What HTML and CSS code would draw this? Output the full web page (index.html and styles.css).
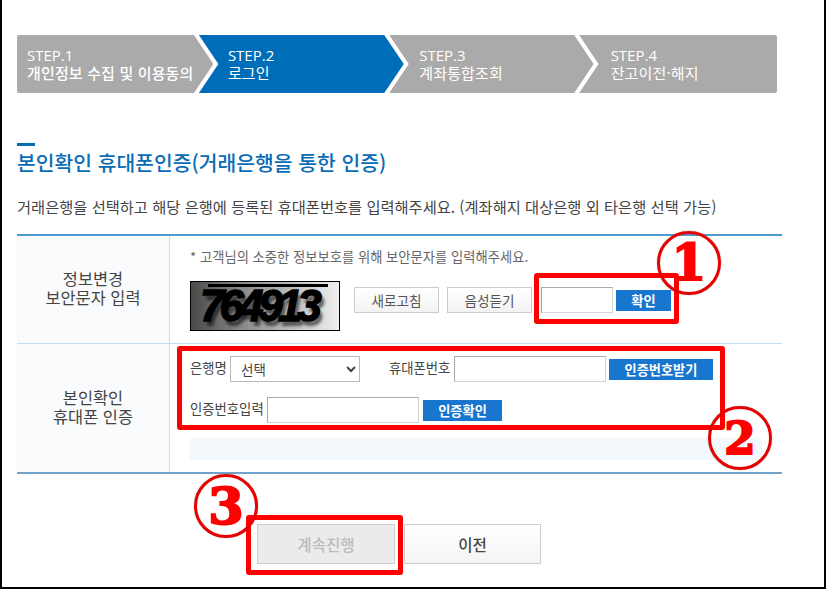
FILE: index.html
```html
<!DOCTYPE html>
<html lang="ko">
<head>
<meta charset="utf-8">
<title>본인확인 휴대폰인증</title>
<link rel="stylesheet" href="styles.css">
</head>
<body>
<div class="frame">
  <ol class="steps">
    <li class="step step-1"><span class="step-num">STEP.1</span><strong class="step-name step-name-bold">개인정보 수집 및 이용동의</strong></li>
    <li class="step step-2 is-active"><span class="step-num">STEP.2</span><strong class="step-name">로그인</strong></li>
    <li class="step step-3"><span class="step-num">STEP.3</span><strong class="step-name">계좌통합조회</strong></li>
    <li class="step step-4"><span class="step-num">STEP.4</span><strong class="step-name">잔고이전·해지</strong></li>
  </ol>

  <h1 class="title">본인확인 휴대폰인증(거래은행을 통한 인증)</h1>
  <p class="desc">거래은행을 선택하고 해당 은행에 등록된 휴대폰번호를 입력해주세요. (계좌해지 대상은행 외 타은행 선택 가능)</p>

  <div class="table">
    <div class="row row-captcha">
      <div class="label">정보변경<br>보안문자 입력</div>
      <div class="cell">
        <p class="note">* 고객님의 소중한 정보보호를 위해 보안문자를 입력해주세요.</p>
        <div class="captcha-line">
          <div class="captcha"><span class="captcha-text">764913</span></div>
          <div class="captcha-actions">
            <button class="btn-light" type="button">새로고침</button>
            <button class="btn-light" type="button">음성듣기</button>
            <input class="field field-code" type="text">
            <button class="btn-blue btn-ok" type="button">확인</button>
          </div>
        </div>
      </div>
    </div>
    <div class="row row-phone">
      <div class="label">본인확인<br>휴대폰 인증</div>
      <div class="cell cell-phone">
        <div class="form-line">
          <label class="form-label form-label-bank">은행명</label>
          <select class="field-select"><option>선택</option></select>
          <label class="form-label form-label-phone">휴대폰번호</label>
          <input class="field field-wide" type="text">
          <button class="btn-blue btn-request" type="button">인증번호받기</button>
        </div>
        <div class="form-line form-line-second">
          <label class="form-label form-label-auth">인증번호입력</label>
          <input class="field field-wide" type="text">
          <button class="btn-blue btn-verify" type="button">인증확인</button>
        </div>
        <div class="info-box"></div>
      </div>
    </div>
  </div>

  <div class="actions">
    <button class="btn-main btn-disabled" type="button">계속진행</button>
    <button class="btn-main" type="button">이전</button>
  </div>

  <div class="mark mark-box-1"></div>
  <div class="mark mark-box-2"></div>
  <div class="mark mark-box-3"></div>
  <div class="badge badge-1"><span>1</span></div>
  <div class="badge badge-2"><span>2</span></div>
  <div class="badge badge-3"><span>3</span></div>
</div>
</body>
</html>
```

FILE: styles.css
```css
* { box-sizing: border-box; }
html, body { margin: 0; padding: 0; background: #fff; }
body { font-family: "Noto Sans CJK KR", "Noto Sans", sans-serif; color: #444; overflow: hidden; }

.frame {
  position: relative;
  width: 826px;
  height: 589px;
  padding: 35px 0 0 15px;
  border-left: 2px solid #000;
  border-right: 2px solid #000;
  border-bottom: 2px solid #000;
  overflow: hidden;
}

/* Steps */
.steps { display: flex; list-style: none; margin: 0; padding: 0; width: 760px; height: 58px; }
.step {
  display: flex;
  flex-direction: column;
  justify-content: center;
  height: 58px;
  margin-left: -14.5px;
  background: #aaa;
  color: #fff;
  font-size: 15px;
  line-height: 18px;
  padding-bottom: 1px;
}
.step-1 { margin-left: 0; width: 196.5px; padding-left: 10px; border-radius: 2px 0 0 2px;
  clip-path: polygon(0 0, calc(100% - 19.5px) 0, 100% 50%, calc(100% - 19.5px) 100%, 0 100%); }
.step-2, .step-3 { clip-path: polygon(0 0, calc(100% - 19.5px) 0, 100% 50%, calc(100% - 19.5px) 100%, 0 100%, 19.5px 50%); }
.step-2 { width: 205px; padding-left: 29px; }
.step-3 { width: 204.5px; padding-left: 30px; }
.step-4 { width: 198px; padding-left: 31.5px; border-radius: 0 2px 2px 0;
  clip-path: polygon(0 0, 100% 0, 100% 100%, 0 100%, 19.5px 50%); }
.is-active { background: #006db8; }
.step-num { font-family: "Open Sans", sans-serif; font-size: 15px; }
.step-name { font-weight: 400; white-space: nowrap; letter-spacing: 0.15px; }
.step-name-bold { font-weight: 500; }

/* Heading */
.title {
  position: relative;
  margin: 50px 0 0;
  padding-top: 6px;
  font-size: 20.4px;
  line-height: 26px;
  font-weight: 500;
  color: #0a6cb5;
  white-space: nowrap;
}
.title::before {
  content: "";
  position: absolute;
  left: 0;
  top: 0;
  width: 18px;
  height: 3px;
  background: #0a6cb5;
}
.desc { margin: 21px 0 0; font-size: 15.3px; line-height: 20px; color: #444; white-space: nowrap; }

/* Table */
.table { width: 765px; margin-top: 18px; border-top: 2px solid #4f9bcf; border-bottom: 2px solid #6fa3cc; }
.row { display: grid; grid-template-columns: 153px 1fr; }
.row-captcha { height: 108px; border-bottom: 1px solid #c5ddf0; }
.row-phone { height: 128px; }
.label {
  display: flex;
  align-items: center;
  justify-content: center;
  text-align: center;
  padding-bottom: 3px;
  background: #f9fbfd;
  border-right: 1px solid #c8dcea;
  font-size: 16.4px;
  line-height: 19px;
  color: #444;
}
.cell { padding: 12px 20px 0; }
.note { margin: 0; font-size: 13.3px; line-height: 18px; color: #666; white-space: nowrap; }
.captcha-line { display: flex; align-items: flex-start; margin-top: 15px; }
.captcha {
  position: relative;
  width: 150px;
  height: 50px;
  flex: none;
  border: 1px solid #000;
  background: linear-gradient(90deg, #4a4a4a 0%, #8a8a8a 35%, #c8c8c8 75%, #f0f0f0 100%);
  overflow: hidden;
}
.captcha::before {
  content: "";
  position: absolute;
  left: 17px;
  top: 2px;
  width: 120px;
  height: 3px;
  background: #000;
}
.captcha-text {
  display: block;
  margin-left: 9px;
  font-family: "Liberation Sans", sans-serif;
  font-size: 44px;
  line-height: 47px;
  font-weight: 700;
  font-style: italic;
  letter-spacing: -5px;
  color: #000;
  -webkit-text-stroke: 1.4px #000;
  text-shadow: 3px 5px 3px rgba(0,0,0,.55);
}
.captcha-actions { display: flex; align-items: center; margin-top: 6px; margin-left: 14px; }
.btn-light {
  width: 85px;
  height: 26px;
  margin-right: 8px;
  padding: 0;
  border: 1px solid #ccc;
  background: linear-gradient(#fff, #f3f3f3);
  color: #555;
  font: 400 13.6px/24px "Noto Sans CJK KR", sans-serif;
}
.btn-light + .btn-light { margin-right: 9px; }
.field {
  height: 26px;
  padding: 0 4px;
  background: #fff;
  border: 1px solid;
  border-color: #aaa #d4d4d4 #d4d4d4 #aaa;
  outline: 0;
}
.field-code { width: 72px; margin-right: 3px; }
.btn-blue {
  height: 21px;
  padding: 0;
  border: 0;
  background: #1976ce;
  color: #fff;
  font: 700 13.2px/21px "Noto Sans CJK KR", sans-serif;
}
.btn-ok { width: 55px; }
.btn-request { width: 104px; margin-left: 3px; }
.btn-verify { width: 79px; margin-left: 4px; }

.form-line { display: flex; align-items: center; height: 26px; }
.form-line-second { margin-top: 15px; }
.form-label { font-size: 13.35px; line-height: 18px; color: #444; white-space: nowrap; padding-bottom: 2px; }
.form-label-bank { width: 40px; }
.form-label-auth { width: 74px; }
.field-select {
  width: 130px;
  height: 26px;
  padding: 0 0 0 6px;
  background: #fff;
  border: 1px solid #bbb;
  color: #444;
  font: 400 13.5px "Noto Sans CJK KR", sans-serif;
}
.form-label-phone { width: 62px; margin-left: 29px; }
.field-wide { width: 152px; margin-left: 3px; }
.info-box { height: 22px; margin-top: 15px; background: #f2f8fc; }

/* Bottom buttons */
.actions { display: flex; justify-content: center; gap: 9px; width: 764px; margin-top: 50px; }
.btn-main {
  width: 137px;
  height: 40px;
  padding: 0;
  border: 1px solid #ccc;
  background: linear-gradient(#fff, #f4f4f4);
  color: #444;
  font: 500 15.6px/38px "Noto Sans CJK KR", sans-serif;
}
.btn-disabled { width: 138px; background: #ebebeb; color: #bbb; }

/* Annotations drawn over the page */
.mark { position: absolute; border: 5px solid #f00; border-radius: 3px; }
.mark-box-1 { left: 532px; top: 273px; width: 145px; height: 51px; }
.mark-box-2 { left: 175px; top: 346px; width: 548px; height: 84px; }
.mark-box-3 { left: 244px; top: 515px; width: 157px; height: 60px; }
.badge {
  position: absolute;
  display: flex;
  align-items: center;
  justify-content: center;
  width: 64px;
  height: 64px;
  border: 3px solid #e60000;
  border-radius: 50%;
  box-shadow: 0 0 1px #555;
  font-family: "DejaVu Serif", serif;
  font-weight: 700;
  color: #f00;
  line-height: 1;
  -webkit-text-stroke: 2px #f00;
}
.badge-1 { left: 655px; top: 231px; font-size: 50px; }
.badge-2 { left: 706px; top: 406px; font-size: 45px; }
.badge-3 { left: 192px; top: 474px; font-size: 51px; }
```
